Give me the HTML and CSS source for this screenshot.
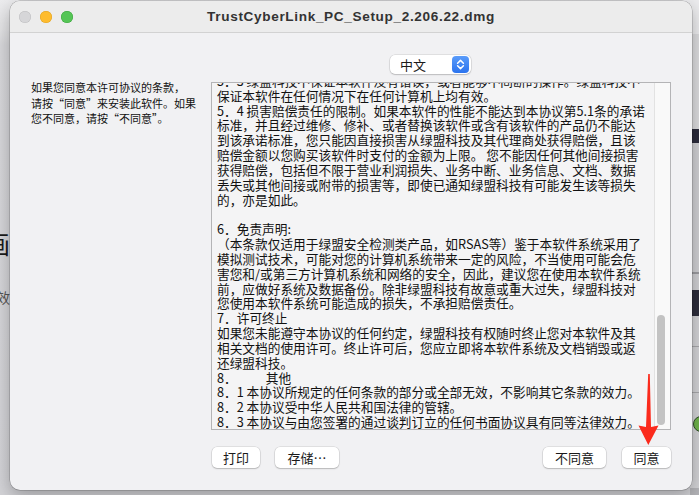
FILE: index.html
```html
<!DOCTYPE html>
<html lang="zh-CN">
<head>
<meta charset="utf-8">
<title>TrustCyberLink_PC_Setup_2.206.22.dmg</title>
<link rel="stylesheet" href="styles.css">
</head>
<body>
<div class="desktop">
  <div class="bg-left">
    <span class="bg-glyph-big">画</span>
    <span class="bg-glyph-small">效</span>
  </div>
  <div class="bg-right">
    <span class="bg-check"></span>
  </div>

  <div class="window">
    <div class="titlebar">
      <div class="lights">
        <span class="light light-close"></span>
        <span class="light light-min"></span>
        <span class="light light-max"></span>
      </div>
      <div class="title">TrustCyberLink_PC_Setup_2.206.22.dmg</div>
      <div></div>
    </div>

    <div class="content">
      <div class="popup-row">
        <div class="popup">
          <span class="popup-label">中文</span>
          <span class="stepper">
            <svg width="17" height="17" viewBox="0 0 17 17"><path d="M5.6 7.2 L8.5 4.4 L11.4 7.2 M5.6 9.8 L8.5 12.6 L11.4 9.8" fill="none" stroke="#fff" stroke-width="1.5" stroke-linecap="round" stroke-linejoin="round"/></svg>
          </span>
        </div>
      </div>

      <div class="prompt">如果您同意本许可协议的条款，
请按“同意”来安装此软件。如果
您不同意，请按“不同意”。</div>

      <div class="license">
        <div class="license-text">
          <div class="lines">5．3 绿盟科技不保证本软件没有错误，或者能够不间断的操作。绿盟科技不
保证本软件在任何情况下在任何计算机上均有效。
5．4 损害赔偿责任的限制。如果本软件的性能不能达到本协议第5.1条的承诺
标准，并且经过维修、修补、或者替换该软件或含有该软件的产品仍不能达
到该承诺标准，您只能因直接损害从绿盟科技及其代理商处获得赔偿，且该
赔偿金额以您购买该软件时支付的金额为上限。 您不能因任何其他间接损害
获得赔偿，包括但不限于营业利润损失、业务中断、业务信息、文档、数据
丢失或其他间接或附带的损害等，即使已通知绿盟科技有可能发生该等损失
的，亦是如此。

6．免责声明:
（本条款仅适用于绿盟安全检测类产品，如RSAS等）鉴于本软件系统采用了
模拟测试技术，可能对您的计算机系统带来一定的风险，不当使用可能会危
害您和/或第三方计算机系统和网络的安全，因此，建议您在使用本软件系统
前，应做好系统及数据备份。除非绿盟科技有故意或重大过失，绿盟科技对
您使用本软件系统可能造成的损失，不承担赔偿责任。
7．许可终止
如果您未能遵守本协议的任何约定，绿盟科技有权随时终止您对本软件及其
相关文档的使用许可。终止许可后，您应立即将本软件系统及文档销毁或返
还绿盟科技。
8．<span class="tab"></span>其他
8．1 本协议所规定的任何条款的部分或全部无效，不影响其它条款的效力。
8．2 本协议受中华人民共和国法律的管辖。
8．3 本协议与由您签署的通过谈判订立的任何书面协议具有同等法律效力。</div>
        </div>
        <div class="track"><div class="thumb"></div></div>
      </div>

      <div class="buttons">
        <div class="btn-group">
          <button class="btn btn-print">打印</button>
          <button class="btn btn-save">存储…</button>
        </div>
        <div class="btn-group">
          <button class="btn btn-disagree">不同意</button>
          <button class="btn btn-agree">同意</button>
        </div>
      </div>
    </div>
  </div>

  <svg class="arrow" width="26" height="76" viewBox="0 0 26 76">
    <polygon points="12.2,2 13.8,2 15,55 22.5,53.5 12.3,73 2.5,53.5 10,55" fill="#fb2a1c"/>
  </svg>
</div>
</body>
</html>
```

FILE: styles.css
```css
* { box-sizing: border-box; }

body {
  margin: 0;
  width: 699px;
  height: 495px;
  overflow: hidden;
  font-family: "Noto Sans CJK SC", "Noto Sans", sans-serif;
  color: #111;
}

.desktop {
  position: relative;
  width: 699px;
  height: 495px;
  overflow: hidden;
  background: linear-gradient(#ececee 0, #e4e4e6 28px, #d8d8db 45px, #d3d3d7 100%);
}

.bg-left {
  position: absolute;
  left: 0;
  top: 0;
  width: 12px;
  height: 495px;
  overflow: hidden;
}

.bg-glyph-big {
  position: absolute;
  left: -15px;
  top: 228px;
  font-size: 25px;
  line-height: 30px;
  color: #1a1a1a;
}

.bg-glyph-small {
  position: absolute;
  left: -4px;
  top: 288px;
  font-size: 14px;
  line-height: 18px;
  color: #555;
}

.bg-right {
  position: absolute;
  left: 690px;
  top: 0;
  width: 9px;
  height: 495px;
  overflow: hidden;
  background: linear-gradient(
    #ececee 0, #ececee 34px,
    #dcdcde 34px, #dcdcde 129px,
    #2c2c3c 129px, #2c2c3c 143px,
    #d0d0d3 143px, #d0d0d3 272px,
    #9c9ca0 272px, #9c9ca0 274px,
    #d0d0d3 274px, #d0d0d3 290px,
    #2e2e3c 290px, #2e2e3c 316px,
    #d3d3d6 316px, #d3d3d6 346px,
    #a8a8ab 346px, #a8a8ab 347px,
    #d3d3d6 347px, #d3d3d6 392px,
    #a8a8ab 392px, #a8a8ab 393px,
    #d3d3d6 393px, #d3d3d6 488px,
    #b4b4b8 488px);
}

.bg-check {
  position: absolute;
  left: 3px;
  top: 416px;
  width: 16px;
  height: 16px;
  border-radius: 50%;
  background: #6fb34a;
  border: 1.5px solid #2f4a28;
}

.window {
  position: absolute;
  left: 10px;
  top: 1px;
  width: 682px;
  height: 489px;
  border-radius: 10px;
  overflow: hidden;
  background: #f1f1f3;
  box-shadow: 0 0 0 0.5px rgba(0, 0, 0, 0.28), 0 6px 18px rgba(0, 0, 0, 0.28);
  display: flex;
  flex-direction: column;
}

.titlebar {
  height: 32px;
  flex: none;
  display: grid;
  grid-template-columns: 1fr auto 1fr;
  align-items: center;
  background: #ececec;
  border-bottom: 1px solid #d2d2d2;
}

.lights {
  display: flex;
  gap: 9px;
  padding-left: 9px;
}

.light {
  width: 12px;
  height: 12px;
  border-radius: 50%;
}

.light-close { background: #d6d6d8; box-shadow: inset 0 0 0 0.5px #bdbdbf; }
.light-min { background: #febc2e; box-shadow: inset 0 0 0 0.5px #dea123; }
.light-max { background: #55c556; box-shadow: inset 0 0 0 0.5px #3aa33c; }

.title {
  font-family: "Liberation Sans", Arial, sans-serif;
  font-weight: bold;
  font-size: 13.6px;
  letter-spacing: 0.65px;
  color: #333;
  white-space: nowrap;
}

.content {
  flex: 1;
  display: grid;
  grid-template-columns: 180px 460px;
  grid-template-rows: 19px 348px 21px;
  padding: 22px 21px 22px 21px;
  row-gap: 0;
}

.popup-row {
  grid-column: 2;
  grid-row: 1;
  padding-left: 179px;
}

.popup {
  width: 81px;
  height: 19px;
  display: flex;
  align-items: center;
  background: #fff;
  border-radius: 5px;
  box-shadow: 0 0 0 0.5px rgba(0, 0, 0, 0.14), 0 1px 1.5px rgba(0, 0, 0, 0.16);
  padding-left: 10px;
  padding-right: 2px;
}

.popup-label {
  font-size: 13px;
  line-height: 19px;
  color: #1a1a1a;
}

.stepper {
  margin-left: auto;
  width: 17px;
  height: 17px;
  border-radius: 4px;
  background: linear-gradient(#5a9cfa, #2b73ee);
  display: flex;
}

.prompt {
  grid-column: 1;
  grid-row: 2;
  margin-top: 6px;
  font-size: 11px;
  line-height: 15.5px;
  white-space: pre;
  color: #111;
}

.license {
  grid-column: 2;
  grid-row: 2;
  margin-top: 8px;
  height: 348px;
  border: 1px solid #b4b4b6;
  background: #f4f4f5;
  display: flex;
  overflow: hidden;
}

.license-text {
  flex: 1;
  overflow: hidden;
}

.lines {
  margin-top: -9px;
  padding-left: 5px;
  font-size: 12.7px;
  line-height: 14.83px;
  white-space: pre;
  color: #111;
}

.tab {
  display: inline-block;
  width: 29px;
}

.track {
  width: 16px;
  flex: none;
  background: #f9f9f9;
  border-left: 1px solid #e2e2e2;
  padding: 232px 0 0 2px;
}

.thumb {
  width: 8px;
  height: 110px;
  border-radius: 4px;
  background: #c3c3c3;
}

.buttons {
  grid-column: 2;
  grid-row: 3;
  margin-top: 25px;
  display: flex;
  justify-content: space-between;
  padding-left: 1px;
}

.btn-group {
  display: flex;
  gap: 15px;
}

.btn-group + .btn-group { gap: 16px; }

.btn {
  height: 21px;
  padding: 0;
  border: none;
  border-radius: 5px;
  background: #fff;
  box-shadow: 0 0 0 0.5px rgba(0, 0, 0, 0.14), 0 1px 1.5px rgba(0, 0, 0, 0.18);
  font-family: "Noto Sans CJK SC", sans-serif;
  font-size: 13px;
  line-height: 21px;
  color: #1a1a1a;
}

.btn-print { width: 48px; }
.btn-save { width: 64px; }
.btn-disagree { width: 63px; }
.btn-agree { width: 49px; }

.arrow {
  position: absolute;
  left: 636px;
  top: 372px;
}
```
